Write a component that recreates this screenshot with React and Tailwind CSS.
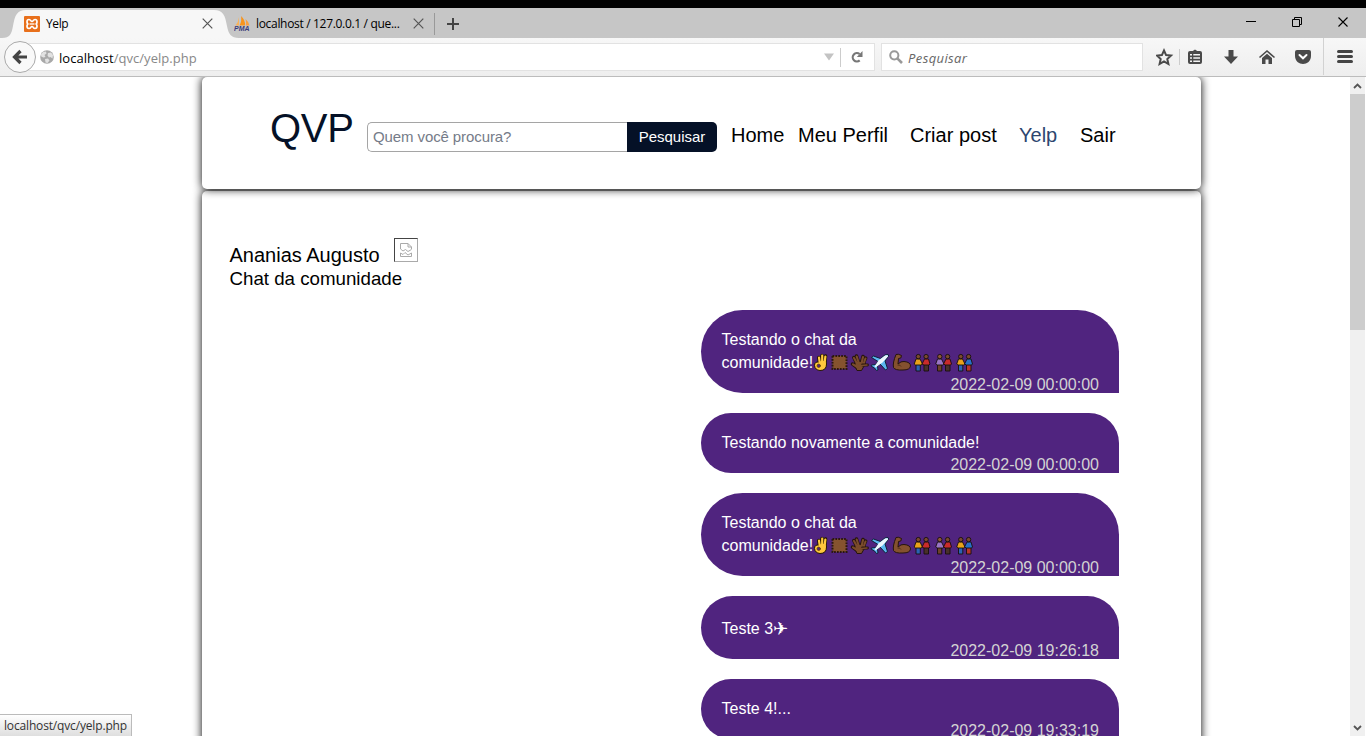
import React from "react";

const UI = "font-['Open_Sans','Noto_Sans',sans-serif]";

function XamppIcon() {
  return (
    <svg className="block h-4 w-4" viewBox="0 0 16 16">
      <rect width="16" height="16" rx="1" fill="#e8701c" />
      <path
        d="M5 3.500C3.200 3.500 3 4.600 3 5.700C3 7.200 3.700 8 4.600 8C3.700 8 3 8.800 3 10.300C3 11.500 3.300 12.500 5 12.500C7 12.500 6.600 10.500 8 10.500C9.400 10.500 9 12.500 11 12.500C12.700 12.500 13 11.500 13 10.300C13 8.800 12.300 8 11.400 8C12.300 8 13 7.200 13 5.700C13 4.600 12.800 3.500 11 3.500C9 3.500 9.400 5.500 8 5.500C6.600 5.500 7 3.500 5 3.500Z"
        fill="none"
        stroke="#fff"
        strokeWidth="1.700"
      />
      <path d="M5.500 8H10.500" stroke="#fff" strokeWidth="1.300" />
    </svg>
  );
}

function PmaIcon() {
  return (
    <svg className="block h-4 w-4" viewBox="0 0 16 16">
      <path d="M5 1Q4.500 6 1.500 9.500H5Z" fill="#f9b25a" />
      <path d="M7 0Q11.500 4 11 9.500H5.500Q8 5 7 0Z" fill="#f7941d" />
      <path d="M11.500 3Q15 6 15.500 9.500H11.800Q12.500 6 11.500 3Z" fill="#f9a040" />
      <text x="0" y="15.300" fontSize="6.600" fontWeight="bold" fontStyle="italic" fontFamily="Liberation Sans, sans-serif" fill="#3b3b78" textLength="15.500" lengthAdjust="spacingAndGlyphs">PMA</text>
    </svg>
  );
}

function CloseIcon() {
  return (
    <svg className="block h-[11px] w-[11px]" viewBox="0 0 11 11">
      <path d="M.7 .7L10.300 10.300M10.300 .7L.7 10.300" stroke="#555" strokeWidth="1.200" />
    </svg>
  );
}

function Chrome() {
  return (
    <header className={`relative z-20 h-[77px] w-full shrink-0 ${UI} text-black`}>
      <div className="h-2 bg-black" />
      <div className="flex h-[30px] items-stretch bg-[#c6c6c6]">
        <div className="relative flex w-[234px] items-center">
          <svg className="absolute left-0 top-0 h-[30px] w-[240px]" viewBox="0 0 240 30">
            <path d="M2 30C10 30 11.500 26 13 18C15 7 17 2 26 2H214C223 2 225 7 227 18C228.500 26 231 30 239 30Z" fill="#f7f7f7" />
          </svg>
          <div className="relative flex w-full items-center pl-6 pt-[1px]">
            <XamppIcon />
            <span className="ml-[6px] w-[156px] text-[12px] leading-4 tracking-[-0.4px]">Yelp</span>
            <CloseIcon />
          </div>
        </div>
        <div className="flex w-[200px] items-center pt-[1px]">
          <PmaIcon />
          <span className="ml-[6px] w-[157px] whitespace-nowrap text-[12px] leading-4 tracking-[-0.32px]">localhost / 127.0.0.1 / que...</span>
          <CloseIcon />
        </div>
        <div className="mt-[5px] h-[22px] w-px bg-[#999]" />
        <svg className="ml-3 mt-[10px] h-3 w-3" viewBox="0 0 12 12">
          <path d="M6 0V12M0 6H12" stroke="#444" strokeWidth="2" />
        </svg>
        <div className="ml-auto flex pt-2">
          <svg className="h-3 w-[105px]" viewBox="0 0 105 12">
            <path d="M0 5.500H10" stroke="#000" />
            <path d="M46.500 3.500H53.500V10.500H46.500ZM48.500 3V1.500H55.500V8.500H54" fill="none" stroke="#000" />
            <path d="M92.500 1.500L101.500 10.500M101.500 1.500L92.500 10.500" stroke="#000" strokeWidth="1.100" />
          </svg>
          <div className="w-[15px]" />
        </div>
      </div>
      <div className="flex h-[39px] items-start border-b border-[#bcbcbc] bg-linear-to-b from-[#f7f7f7] to-[#eeeeee]">
        <div className="relative z-10 ml-1 mt-[3px] flex h-8 w-8 shrink-0 items-center justify-center rounded-full border border-[#aaa] bg-[#f9f9f9]">
          <svg className="h-4 w-4" viewBox="0 0 16 16">
            <path d="M8.500 2L2.500 8L8.500 14M2.500 8H15" fill="none" stroke="#444" strokeWidth="3.200" />
          </svg>
        </div>
        <div className="-ml-4 mt-[5px] flex h-7 w-[855px] items-center border border-[#e2e2e2] bg-white pl-[19px]">
          <svg className="h-[14px] w-[14px]" viewBox="0 0 14 14">
            <circle cx="7" cy="7" r="6.800" fill="#a9a9a9" />
            <path d="M1 4.500L3 2L6 1.500L6.500 3.500L4.500 5L5.500 7L3.500 7.500L1.200 6.500ZM8 3L11 2.500L13 5L12.500 8.500L10.500 7L9 7.500L7.500 5.500ZM5 9L8 8.500L9.500 10.500L7.500 13L5.500 12.500Z" fill="#e2e2e2" />
          </svg>
          <span className="ml-[5px] pt-[2px] text-[13px] leading-5 tracking-[0.03px] text-[#888]"><span className="text-black">localhost</span>/qvc/yelp.php</span>
          <div className="ml-auto flex items-center">
            <svg className="h-2 w-[10px]" viewBox="0 0 10 8"><path d="M0 0.500H10L5 7.500Z" fill="#c3c3c3" /></svg>
            <div className="ml-[6px] h-[19px] w-px bg-[#ccc]" />
            <svg className="ml-[10px] mr-[11px] h-3 w-3" viewBox="0 0 12 12">
              <path d="M8.700 9.400A4.200 4.200 0 1 1 8.600 3" fill="none" stroke="#777" strokeWidth="2.200" />
              <path d="M11.500 0V6H5.800Z" fill="#777" />
            </svg>
          </div>
        </div>
        <div className="ml-[6px] mt-[5px] flex h-7 w-[262px] items-center border border-[#e2e2e2] bg-white pl-[7px]">
          <svg className="h-[14px] w-[14px]" viewBox="0 0 14 14">
            <circle cx="5.300" cy="5.300" r="4.100" fill="none" stroke="#999" strokeWidth="2" />
            <path d="M8.300 8.300L13 13" stroke="#999" strokeWidth="2.600" />
          </svg>
          <span className="ml-[5px] pt-[2px] text-[13px] italic leading-5 tracking-[0.4px] text-[#666]">Pesquisar</span>
        </div>
        <svg className="ml-[13px] mt-0 h-[38px] w-[210px] shrink-0" viewBox="1156 38 210 38">
          <path d="M1164 50.500L1166.100 55.100L1171 55.600L1167.300 59L1168.400 64L1164 61.400L1159.600 64L1160.700 59L1157 55.600L1161.900 55.100Z" fill="none" stroke="#4a4a4a" strokeWidth="2" />
          <path d="M1179.500 49V65" stroke="#ccc" />
          <path d="M1192 51.500L1195 49.500L1198 51.500" fill="#4a4a4a" />
          <rect x="1188" y="51" width="14" height="13" rx="2" fill="#4a4a4a" />
          <path d="M1190 54.700H1192M1193.300 54.700H1200M1190 58H1192M1193.300 58H1200M1190 61.300H1192M1193.300 61.300H1200" stroke="#f4f4f4" strokeWidth="1.600" />
          <path d="M1228.500 50H1233.500V56.500H1238L1231 64L1224 56.500H1228.500Z" fill="#4a4a4a" />
          <path d="M1259.500 57.500L1267 51L1274.500 57.500" fill="none" stroke="#4a4a4a" strokeWidth="1.600" />
          <path d="M1262 58L1267 53.800L1272 58V64H1268.500V59.500H1265.500V64H1262Z" fill="#4a4a4a" />
          <path d="M1297 50H1309Q1311 50 1311 52V56C1311 61 1307 64 1303 64S1295 61 1295 56V52Q1295 50 1297 50Z" fill="#4a4a4a" />
          <path d="M1299.500 55L1303 58.300L1306.500 55" fill="none" stroke="#fff" strokeWidth="2" strokeLinecap="round" />
          <path d="M1323.500 38V75" stroke="#d2d2d2" />
          <path d="M1338.500 51.500H1351.500M1338.500 56.500H1351.500M1338.500 61.500H1351.500" stroke="#444" strokeWidth="3" strokeLinecap="round" />
        </svg>
      </div>
    </header>
  );
}

function Couple({ a, b, left, right, legs }) {
  return (
    <g stroke="#17100c" strokeWidth=".9">
      <path d="M2.500 11H6.800V17.500H2.500Z" fill={legs} />
      <path d="M10.500 11H15V17.500H10.500Z" fill={right} />
      <path d="M2.500 5.500H6.500L9 10.500L7.500 11.500L7 11.500H2L.7 10.500Z" fill={a} />
      <path d="M11 5.500H15L16.500 10.500L15.500 11.500H10.500L8.500 10.500Z" fill={b} />
      <circle cx="4.800" cy="3.100" r="2.200" fill={left} />
      <circle cx="12.600" cy="3.100" r="2.200" fill="#7a492e" />
    </g>
  );
}

function EmojiRow() {
  return (
    <svg className="inline-block h-[19px] w-[162px] shrink-0" viewBox="0 0 162 19">
      <g strokeLinejoin="round" strokeLinecap="round" fill="none">
        <path d="M6.500 9.500L5.800 4.500M9 8.500L9 2.500M11.800 9L12.500 3" stroke="#251800" strokeWidth="3.600" />
        <path d="M5.500 9Q1.500 8.500 1.500 12.500Q2 17 7 17.500Q13.500 17.500 13.500 11L13 8L9 7Z" fill="#ffc83d" stroke="#251800" />
        <path d="M6.800 10L6 4.500M9.200 10L9.200 2.500M11.500 10.500L12.400 3.500" stroke="#ffc83d" strokeWidth="2.200" />
        <circle cx="5.700" cy="12.800" r="1.700" fill="#50247f" stroke="#6b4600" strokeWidth=".8" />
      </g>
      <rect x="19.500" y="3" width="14" height="13" fill="#85532f" stroke="#2b180c" strokeWidth="2" strokeDasharray="1.700 1.200" />
      <g strokeLinejoin="round" strokeLinecap="round" fill="none">
        <path d="M43.500 10L40.800 4.500M45.500 9L43.500 3M48.500 9L50 3.500M50.500 10L52.700 5M45 15L39.500 11" stroke="#26150c" strokeWidth="3.500" />
        <path d="M42.500 9L47 8.500L52 9Q53.500 10.500 50.500 14L48.500 17.500H44L42 13Z" fill="#7b4c2c" stroke="#26150c" />
        <path d="M44 10.500L41 5M46 10.500L43.700 3.500M48.500 10.500L50 4M50.500 11L52.500 5.500M45 14.500L40 11.300" stroke="#7b4c2c" strokeWidth="2.100" />
        <path d="M49.500 12H54.500" stroke="#26150c" strokeWidth="2.800" />
        <path d="M48 12.500L54 12" stroke="#7b4c2c" strokeWidth="1.500" />
      </g>
      <g stroke="#102036" strokeWidth="1" strokeLinejoin="round">
        <path d="M58.500 4.500L60.500 3L67.500 5.500L72 2Q76 .5 75.500 3L72 8L74.500 15.500L72.500 17L67 11L64.500 13L65 17L63.500 17.500L61.500 15L58 13L58.500 12L62.500 11.500L65 8.500Z" fill="#5bb6ef" />
        <path d="M65.500 7.500L72 2.500Q75.500 1.500 75 3.500L69.500 9.500L62.500 14.500L61.500 13.500Z" fill="#ecf6fd" stroke="none" />
      </g>
      <path d="M83 1.500Q85 .5 88.500 2.500L87.800 5L85.500 5.500L85 11Q88 8 91 8.500Q97.500 9 97.500 13Q97 17 90 17Q82 17.500 80.500 14.500Q79.500 10 83 1.500Z" fill="#84512f" stroke="#26150c" />
      <path d="M84.500 12Q87 11.500 88 13.500" fill="none" stroke="#4c2d19" />
      <g transform="translate(100.500 .5)"><Couple a="#e9a21b" b="#c92b2b" left="#7a492e" right="#49302a" legs="#2b62b4" /></g>
      <g transform="translate(122 .5)"><Couple a="#9a75c5" b="#c92b2b" left="#8e5737" right="#49302a" legs="#6e412a" /></g>
      <g transform="translate(143 .5)"><Couple a="#e9a21b" b="#2770c9" left="#7a492e" right="#b9352a" legs="#2b62b4" /></g>
    </svg>
  );
}

function Bubble({ time, spaced, children }) {
  return (
    <article className={`flex shrink-0 flex-col rounded-[50px] rounded-br-none bg-[#50247f] px-5 text-[16px] text-white ${spaced ? "pt-[22px]" : "pt-[19px]"}`}>
      <div className="pl-[0.5px] leading-[22px]">{children}</div>
      <time className="h-[19px] self-end leading-[21px] text-[#d3d3d3]">{time}</time>
    </article>
  );
}

function EmojiMessage() {
  return (
    <Bubble time="2022-02-09 00:00:00">
      <p>Testando o chat da</p>
      <p className="flex h-[23px] items-center"><span>comunidade!</span><EmojiRow /></p>
    </Bubble>
  );
}

function Page() {
  return (
    <main className="mx-auto flex w-[999px] flex-col gap-[2px] text-black">
      <section className="relative z-10 flex h-28 shrink-0 rounded-[5px] bg-white pl-[68px] shadow-[0_0_10px_#000]">
        <h1 className="mt-[28px] w-[97px] text-[40px] leading-[46px] tracking-[-0.3px] text-[#051127]">QVP</h1>
        <div className="mt-[45px] flex h-[30px] w-[350px]">
          <div className="w-[260px] rounded-l-[5px] border border-r-0 border-[#a5a5a5] pl-[5px] text-[15px] leading-[27px] tracking-[-0.1px] text-[#757b88]">Quem você procura?</div>
          <button className="w-[90px] rounded-r-[5px] bg-[#051127] text-[15px] leading-[28px] text-white">Pesquisar</button>
        </div>
        <nav className="ml-[14px] mt-[46px] flex whitespace-nowrap text-[20px] leading-6">
          <a className="w-[67px]">Home</a>
          <a className="w-[112px]">Meu Perfil</a>
          <a className="w-[109px]">Criar post</a>
          <a className="w-[61px] text-[#2d466f]">Yelp</a>
          <a>Sair</a>
        </nav>
      </section>
      <section className="flex h-[620px] shrink-0 flex-col rounded-[5px] bg-white pt-[47px] shadow-[0_0_10px_#000]">
        <div className="flex h-[29px] pl-[27.5px]">
          <h2 className="w-[164.5px] pt-[5px] text-[20px] leading-6">Ananias Augusto</h2>
          <div className="flex h-6 w-6 items-center justify-center border border-b-[#aaa] border-l-[#444] border-r-[#aaa] border-t-[#444]">
            <svg className="h-[14px] w-3" viewBox="0 0 12 14">
              <path d="M.5 6V.5H8L11.500 4V6M8 .5V4H11.500M.5 6L3 8L5.500 6.500L8 8.500L11.500 6.500M.5 10V13.500H11.500V10M.5 10L3 11.500L5 9.500L8 12L11.500 10" fill="none" stroke="#aaa" />
            </svg>
          </div>
        </div>
        <h3 className="pl-[27.5px] text-[18.72px] leading-6">Chat da comunidade</h3>
        <div className="ml-[499px] mt-[19px] flex w-[418px] flex-col gap-5">
          <EmojiMessage />
          <Bubble time="2022-02-09 00:00:00">Testando novamente a comunidade!</Bubble>
          <EmojiMessage />
          <Bubble time="2022-02-09 19:26:18" spaced>Teste 3<span className="inline-block h-[22px] align-top font-['DejaVu_Sans',sans-serif] text-[18px] font-bold">✈</span></Bubble>
          <Bubble time="2022-02-09 19:33:19">Teste 4!...</Bubble>
        </div>
      </section>
    </main>
  );
}

export default function App() {
  return (
    <div className="relative flex h-[736px] w-[1366px] flex-col overflow-hidden bg-white font-['Liberation_Sans',Arial,sans-serif]">
      <Chrome />
      <div className="flex h-[659px] overflow-hidden">
        <div className="w-[1350px] overflow-hidden pl-[53px]">
          <Page />
        </div>
        <aside className="mr-px flex w-[15px] flex-col items-center bg-[#f0f0f0]">
          <svg className="h-[17px] w-[15px] shrink-0" viewBox="0 0 15 17"><path d="M4 11L7.500 7.500L11 11" fill="none" stroke="#555" strokeWidth="1.800" /></svg>
          <div className="h-[236px] w-full bg-[#cdcdcd]" />
          <svg className="mt-auto h-[17px] w-[15px] shrink-0" viewBox="0 0 15 17"><path d="M4 7L7.500 10.500L11 7" fill="none" stroke="#555" strokeWidth="1.800" /></svg>
        </aside>
      </div>
      <div className={`absolute bottom-0 left-0 z-30 h-[22px] w-[132px] border-r border-t border-[#bbb] bg-linear-to-b from-white to-[#dedede] pl-1 text-[12px] leading-[22px] tracking-[-0.16px] text-[#333] ${UI}`}>localhost/qvc/yelp.php</div>
    </div>
  );
}
